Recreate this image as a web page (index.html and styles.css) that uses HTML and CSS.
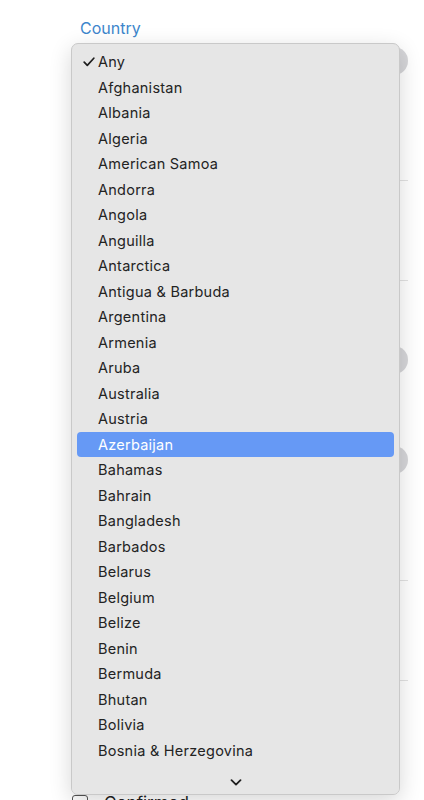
FILE: index.html
```html
<!DOCTYPE html>
<html lang="en">
<head>
    <meta charset="UTF-8">
    <title>Filters</title>
    <link rel="stylesheet" href="styles.css">
</head>
<body>
    <div class="form">
        <label class="field-label" for="country">Country</label>
        <div class="pill" id="country"></div>
        <div class="divider first"></div>
        <div class="divider"></div>
        <div class="pill second"></div>
        <div class="pill third"></div>
        <div class="divider fourth"></div>
        <div class="divider"></div>
        <div class="check-row">
            <span class="check-box"></span>
            <span>Confirmed</span>
        </div>
    </div>

    <div class="menu">
        <ul class="menu-list">
            <li class="menu-item selected">
                <svg class="tick" width="12" height="10" viewBox="0 0 12 10"><path d="M1.2 5.2 L4.3 8.4 L10.8 1.2" fill="none" stroke="#1f1f1f" stroke-width="1.7" stroke-linecap="round" stroke-linejoin="round"/></svg>
                Any
            </li>
            <li class="menu-item">Afghanistan</li>
            <li class="menu-item">Albania</li>
            <li class="menu-item">Algeria</li>
            <li class="menu-item">American Samoa</li>
            <li class="menu-item">Andorra</li>
            <li class="menu-item">Angola</li>
            <li class="menu-item">Anguilla</li>
            <li class="menu-item">Antarctica</li>
            <li class="menu-item">Antigua &amp; Barbuda</li>
            <li class="menu-item">Argentina</li>
            <li class="menu-item">Armenia</li>
            <li class="menu-item">Aruba</li>
            <li class="menu-item">Australia</li>
            <li class="menu-item">Austria</li>
            <li class="menu-item active">Azerbaijan</li>
            <li class="menu-item">Bahamas</li>
            <li class="menu-item">Bahrain</li>
            <li class="menu-item">Bangladesh</li>
            <li class="menu-item">Barbados</li>
            <li class="menu-item">Belarus</li>
            <li class="menu-item">Belgium</li>
            <li class="menu-item">Belize</li>
            <li class="menu-item">Benin</li>
            <li class="menu-item">Bermuda</li>
            <li class="menu-item">Bhutan</li>
            <li class="menu-item">Bolivia</li>
            <li class="menu-item">Bosnia &amp; Herzegovina</li>
            <li class="menu-item">Botswana</li>
            <li class="menu-item">Brazil</li>
        </ul>
        <div class="menu-more">
            <svg width="12" height="7" viewBox="0 0 12 7"><path d="M1.5 1.2 L6 5.6 L10.5 1.2" fill="none" stroke="#1f1f1f" stroke-width="1.8" stroke-linecap="round" stroke-linejoin="round"/></svg>
        </div>
    </div>
</body>
</html>
```

FILE: styles.css
```css
body {
    margin: 0;
    background-color: #ffffff;
    font-family: Inter, "Noto Sans", sans-serif;
    overflow: hidden;
    height: 800px;
}
.form {
    width: 328px;
    padding-left: 80px;
    padding-top: 18px;
    display: flex;
    flex-direction: column;
}
.field-label {
    font-size: 16px;
    line-height: 20px;
    color: #3d86cc;
}
.pill {
    height: 28px;
    margin-top: 9px;
    border-radius: 14px;
    background-color: #d6d6d9;
}
.pill.second {
    margin-top: 65px;
}
.pill.third {
    margin-top: 72px;
}
.divider {
    height: 1px;
    margin-top: 99px;
    background-color: #e2e2e2;
}
.divider.first {
    margin-top: 105px;
}
.divider.fourth {
    margin-top: 106px;
}
.check-row {
    display: flex;
    align-items: center;
    gap: 16px;
    margin-top: 112px;
    margin-left: -8px;
    font-size: 17px;
    color: #222;
}
.check-box {
    width: 14px;
    height: 14px;
    border: 1px solid #555;
    border-radius: 3px;
}

/* open select popup */
.menu {
    position: absolute;
    left: 71px;
    top: 43px;
    width: 327px;
    height: 750px;
    background-color: #e6e6e6;
    border: 1px solid #c9c9c9;
    border-radius: 7px;
    box-shadow: 0 6px 22px rgba(0, 0, 0, 0.16);
    display: flex;
    flex-direction: column;
    overflow: hidden;
}
.menu-list {
    list-style: none;
    margin: 0;
    padding: 5px 5px 0 5px;
    flex: 1;
    overflow: hidden;
}
.menu-item {
    position: relative;
    height: 25.5px;
    line-height: 25.5px;
    padding-left: 21px;
    font-size: 14.5px;
    letter-spacing: 0.25px;
    color: #232323;
    border-radius: 4px;
}
.menu-item.active {
    background-color: #6699f5;
    color: #ffffff;
}
.tick {
    position: absolute;
    left: 6px;
    top: 8px;
}
.menu-more {
    height: 30px;
    padding-bottom: 8px;
    box-sizing: border-box;
    display: flex;
    justify-content: center;
    align-items: flex-end;
    background-color: #e6e6e6;
}
```
